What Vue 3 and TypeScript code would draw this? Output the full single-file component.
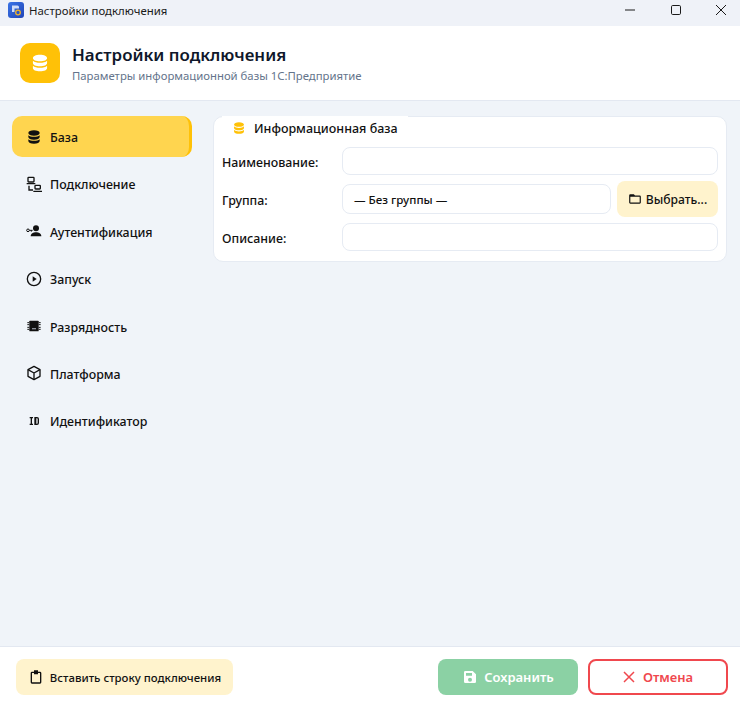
<template>
  <div class="window">
    <div class="titlebar">
      <svg class="app-icon" viewBox="0 0 16 16" width="16" height="16">
        <defs>
          <linearGradient id="appbg" x1="0" y1="0" x2="1" y2="1">
            <stop offset="0" stop-color="#3a74e6" />
            <stop offset="1" stop-color="#1f45b8" />
          </linearGradient>
        </defs>
        <rect width="16" height="16" rx="3" fill="url(#appbg)" />
        <path d="M4 3.500h5.500a1.500 1.500 0 0 1 1.500 1.500v1.500H6.500v3.500H4z" fill="#cfdcf8" />
        <circle cx="10" cy="10.500" r="2.300" fill="none" stroke="#f0b429" stroke-width="1.300" />
      </svg>
      <span class="window-title">Настройки подключения</span>
      <div class="window-controls">
        <svg viewBox="0 0 10 10" width="10" height="10"><path d="M0 5h10" stroke="#1a1a1a" fill="none" /></svg>
        <svg viewBox="0 0 10 10" width="10" height="10"><rect x=".5" y=".5" width="9" height="9" rx="1.200" stroke="#1a1a1a" fill="none" /></svg>
        <svg viewBox="0 0 10 10" width="10" height="10"><path d="M0 0l10 10M10 0L0 10" stroke="#1a1a1a" fill="none" /></svg>
      </div>
    </div>

    <header class="header">
      <div class="header-icon">
        <svg viewBox="0 0 24 24" width="20" height="20"><path :d="dbIcon" fill="#fff" /></svg>
      </div>
      <div class="header-text">
        <div class="header-title">Настройки подключения</div>
        <div class="header-sub">Параметры информационной базы 1С:Предприятие</div>
      </div>
    </header>

    <main class="body">
      <nav class="sidebar">
        <div v-for="(item, i) in menu" :key="item.label" class="nav-item" :class="{ active: i === 0 }">
          <svg class="nav-icon" viewBox="0 0 24 24" width="16" height="16" v-html="item.icon"></svg>
          <span class="nav-label">{{ item.label }}</span>
        </div>
      </nav>

      <section class="content">
        <div class="card">
          <div class="card-title">
            <svg viewBox="0 0 24 24" width="14" height="14"><path :d="dbIcon" fill="#ffc107" /></svg>
            <span>Информационная база</span>
          </div>
          <div class="form">
            <label>Наименование:</label>
            <div class="input wide"></div>
            <label>Группа:</label>
            <div class="input select">— Без группы —</div>
            <button class="btn-pick">
              <svg viewBox="0 0 24 24" width="14" height="14"><path d="M10 4l2 2h8a2 2 0 0 1 2 2v10a2 2 0 0 1-2 2H4a2 2 0 0 1-2-2V6a2 2 0 0 1 2-2zM4 8v10h16V8z" fill="#111" /></svg>
              Выбрать...
            </button>
            <label>Описание:</label>
            <div class="input wide"></div>
          </div>
        </div>
      </section>
    </main>

    <footer class="footer">
      <button class="btn-paste">
        <svg viewBox="0 0 24 24" width="16" height="16"><path d="M9 2h6v2h3a2 2 0 0 1 2 2v14a2 2 0 0 1-2 2H6a2 2 0 0 1-2-2V6a2 2 0 0 1 2-2h3zm-3 4v14h12V6h-3v2H9V6z" fill="#111" /></svg>
        Вставить строку подключения
      </button>
      <div class="footer-right">
        <button class="btn-save">
          <svg viewBox="0 0 24 24" width="16" height="16"><path d="M5 3h11l5 5v11a2 2 0 0 1-2 2H5a2 2 0 0 1-2-2V5a2 2 0 0 1 2-2zm1 3v4h9V6zm6 7a3 3 0 1 0 0 6 3 3 0 0 0 0-6z" fill="#fff" fill-rule="evenodd" /></svg>
          Сохранить
        </button>
        <button class="btn-cancel">
          <svg viewBox="0 0 12 12" width="12" height="12"><path d="M1 1l10 10M11 1L1 11" stroke="#f0484e" stroke-width="1.500" fill="none" /></svg>
          Отмена
        </button>
      </div>
    </footer>
  </div>
</template>

<script setup lang="ts">
const dbIcon =
  "M12 2C7 2 3.500 3.700 3.500 6s3.500 4 8.500 4 8.500-1.700 8.500-4S17 2 12 2zM3.500 9.200V12c0 2.300 3.500 4 8.500 4s8.500-1.700 8.500-4V9.200c-1.700 1.700-4.900 2.600-8.500 2.600S5.200 10.900 3.500 9.200zm0 6V18c0 2.300 3.500 4 8.500 4s8.500-1.700 8.500-4v-2.800c-1.700 1.700-4.900 2.600-8.500 2.600s-6.800-.9-8.500-2.600z";

const stroke = 'fill="none" stroke="#111" stroke-width="2"';

const menu = [
  { label: "База", icon: `<path d="${dbIcon}" fill="#111"/>` },
  {
    label: "Подключение",
    icon: `<g ${stroke}><rect x="3" y="2" width="9" height="7" rx="1"/><rect x="13.500" y="14" width="8" height="5.500" rx="1"/><path d="M1 11.500h13M11 23h13M4.500 14.500V21h6"/></g>`,
  },
  {
    label: "Аутентификация",
    icon: `<circle cx="15" cy="8" r="4.500" fill="#111"/><path d="M7 20c0-4 4-6 8-6s8 2 8 6z" fill="#111"/><circle cx="3" cy="11" r="2" fill="none" stroke="#111" stroke-width="1.500"/><path d="M5 11h5M8 11v2" stroke="#111" stroke-width="1.500"/>`,
  },
  {
    label: "Запуск",
    icon: `<circle cx="12" cy="12" r="10" ${stroke}/><path d="M10 8l6 4-6 4z" fill="#111"/>`,
  },
  {
    label: "Разрядность",
    icon: `<rect x="5" y="4" width="14" height="16" rx="1" fill="#111"/><rect x="9" y="15" width="6" height="2" fill="#8a8f98"/><path d="M2 7h3M2 10h3M2 14h3M2 17h3M19 7h3M19 10h3M19 14h3M19 17h3" stroke="#111" stroke-width="1.500"/>`,
  },
  {
    label: "Платформа",
    icon: `<g ${stroke} stroke-linejoin="round"><path d="M12 2l9 5v10l-9 5-9-5V7z"/><path d="M3 7l9 5 9-5M12 12v10"/></g>`,
  },
  {
    label: "Идентификатор",
    icon: `<g fill="none" stroke="#111" stroke-width="2"><path d="M5.500 7h5M5.500 17h5M8 7v10"/><path d="M13.500 7h3a2 2 0 0 1 2 2v6a2 2 0 0 1-2 2h-3zM14.500 7v10"/></g>`,
  },
];
</script>

<style>
html,
body {
  margin: 0;
  background: #f0f4f9;
}
</style>

<style scoped>
.window {
  width: 740px;
  height: 703px;
  display: flex;
  flex-direction: column;
  overflow: hidden;
  background: #f0f4f9;
  color: #111;
  font-family: "Noto Sans", sans-serif;
}
.titlebar {
  height: 26px;
  box-sizing: border-box;
  flex: none;
  display: flex;
  align-items: center;
  padding: 0 0 6px 8px;
  background: #eff2f8;
}
.app-icon {
  margin-right: 5px;
}
.window-title {
  font-size: 11.400px;
  color: #1a1a1a;
}
.window-controls {
  margin-left: auto;
  display: flex;
  gap: 35.500px;
  padding-right: 14px;
  align-items: center;
}
.header {
  height: 75px;
  flex: none;
  box-sizing: border-box;
  display: flex;
  align-items: center;
  gap: 12px;
  padding-left: 20px;
  background: #fff;
  border-bottom: 1px solid #e3e8f1;
}
.header-icon {
  width: 40px;
  height: 40px;
  border-radius: 10px;
  background: #ffc107;
  display: flex;
  align-items: center;
  justify-content: center;
}
.header-text {
  padding-top: 2px;
}
.header-title {
  font-size: 16.900px;
  font-weight: 600;
  line-height: 24px;
  color: #0f172a;
}
.header-sub {
  font-size: 11.330px;
  line-height: 18px;
  color: #64748b;
}
.body {
  flex: 1;
  display: flex;
  min-height: 0;
}
.sidebar {
  width: 180px;
  flex: none;
  padding: 15px 0 0 12px;
  display: flex;
  flex-direction: column;
  gap: 6.400px;
}
.nav-item {
  height: 41px;
  box-sizing: border-box;
  display: flex;
  align-items: center;
  gap: 8px;
  padding-left: 14px;
  border-radius: 10px;
  font-size: 12.400px;
  font-weight: 500;
}
.nav-item.active {
  background: #ffd54f;
  border-right: 3px solid #ffc107;
}
.nav-icon {
  flex: none;
}
.nav-label {
  padding-top: 2px;
}
.content {
  flex: 1;
  padding: 15px 13px 0 21px;
}
.card {
  background: #fff;
  border: 1px solid #e6ebf3;
  border-radius: 10px;
  padding: 0 8px 10px 8px;
}
.card-title {
  display: flex;
  align-items: center;
  gap: 8px;
  width: 176px;
  height: 24px;
  margin-top: -1px;
  padding-left: 10px;
  background: #fff;
  font-size: 12.500px;
  font-weight: 500;
}
.form {
  display: grid;
  grid-template-columns: 114px 1fr 101px;
  column-gap: 6px;
  row-gap: 6px;
  align-items: center;
  margin-top: 7px;
}
label {
  padding-top: 2px;
  font-size: 12.400px;
  font-weight: 500;
}
.input {
  height: 28px;
  box-sizing: border-box;
  border: 1px solid #e6ebf3;
  border-radius: 8px;
  background: #fff;
  display: flex;
  align-items: center;
  padding-left: 11px;
  font-size: 11.600px;
  font-weight: 500;
}
.wide {
  grid-column: 2 / 4;
}
.select {
  height: 30px;
}
button {
  border: none;
  font-family: inherit;
  font-weight: 500;
  display: flex;
  align-items: center;
  justify-content: center;
  gap: 6px;
  border-radius: 8px;
}
.btn-pick {
  height: 36px;
  background: #fff3cd;
  color: #111;
  font-size: 12.100px;
  gap: 4px;
}
.footer {
  height: 57px;
  flex: none;
  box-sizing: border-box;
  border-top: 1px solid #e3e8f1;
  background: #fff;
  display: flex;
  align-items: flex-start;
  justify-content: space-between;
  padding: 12px 12px 0 16px;
}
.footer-right {
  display: flex;
  gap: 10px;
}
.btn-paste {
  height: 36px;
  width: 217px;
  background: #fff3cd;
  color: #111;
  font-size: 11.400px;
  gap: 6px;
}
.btn-save,
.btn-cancel {
  height: 36px;
  width: 140px;
  box-sizing: border-box;
  font-size: 13px;
  font-weight: 600;
}
.btn-save {
  background: #8bd1a4;
  color: #fff;
  gap: 6px;
}
.btn-cancel {
  background: #fff;
  color: #f0484e;
  border: 2px solid #f0484e;
  gap: 8px;
}
</style>
